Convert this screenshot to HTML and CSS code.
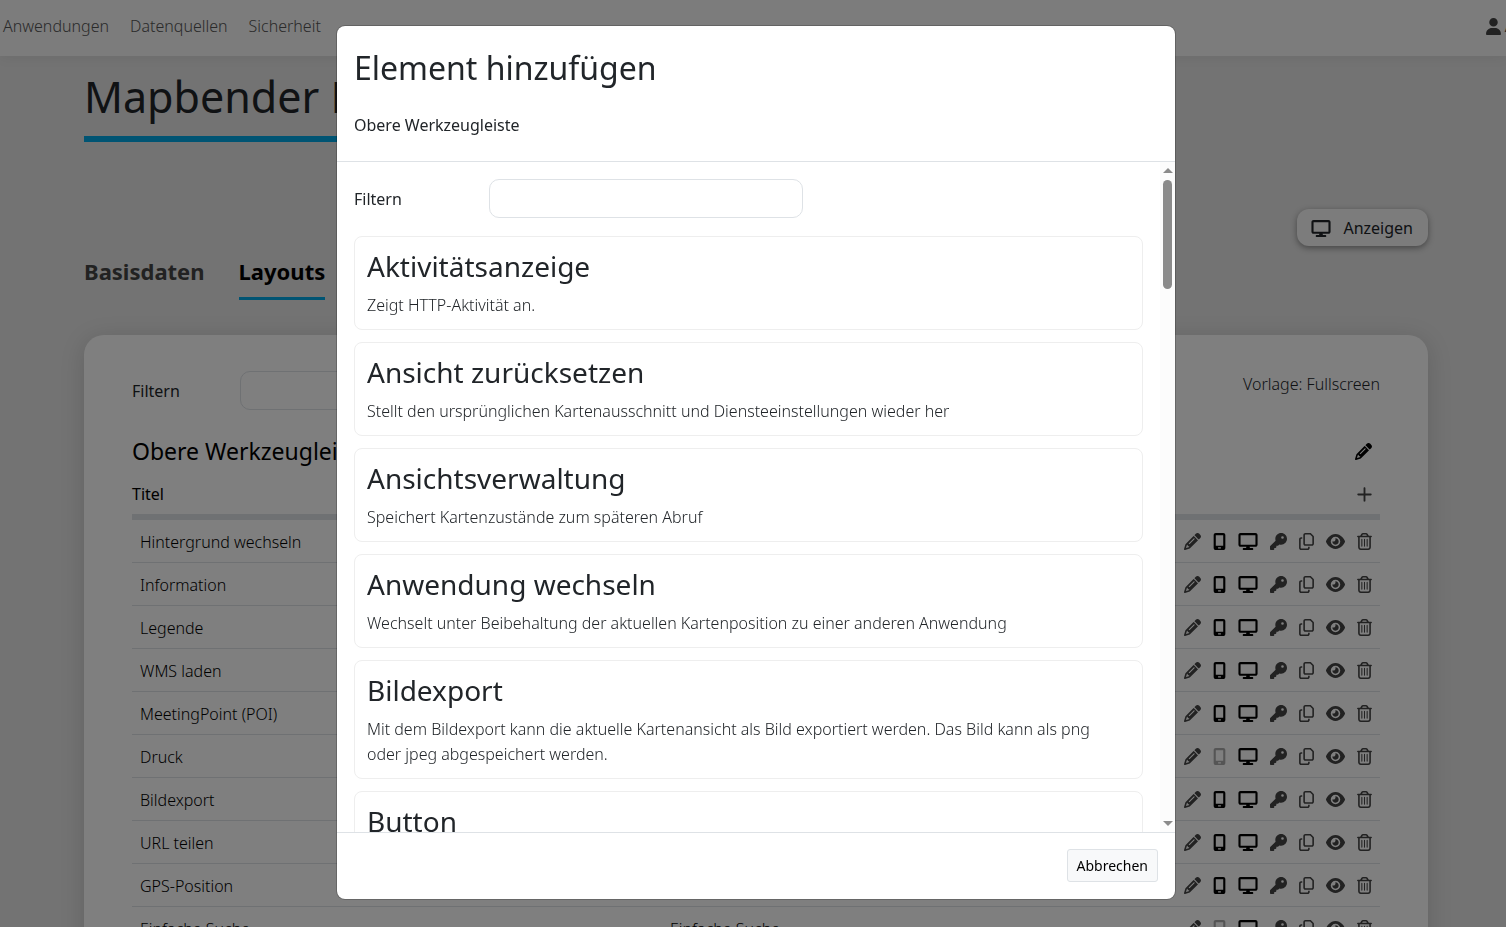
FILE: index.html
```html
<!DOCTYPE html>
<html lang="de">
<head>
<meta charset="UTF-8">
<meta name="viewport" content="width=device-width, initial-scale=1.0">
<title>Mapbender</title>
<link rel="stylesheet" href="styles.css">
</head>
<body>
<svg class="sprite" aria-hidden="true">
  <symbol id="icon-pencil" viewBox="0 0 512 512"><path d="M410.3 231l11.3-11.3-33.9-33.9-62.1-62.1L291.7 89.8l-11.3 11.3-22.6 22.6L58.6 322.9c-10.4 10.4-18 23.3-22.2 37.4L1 480.7c-2.5 8.4-.2 17.5 6.1 23.7s15.3 8.5 23.7 6.1l120.3-35.4c14.1-4.2 27-11.8 37.4-22.2L387.7 253.7 410.3 231zM160 399.4l-9.1 22.7c-4 3.1-8.5 5.4-13.3 6.9L59.4 452l23-78.1c1.4-4.9 3.8-9.4 6.9-13.3l22.7-9.1v32c0 8.8 7.2 16 16 16h32zM362.7 18.7L348.3 33.2 325.7 55.8 314.3 67.1l33.9 33.9 62.1 62.1 33.9 33.9 11.3-11.3 22.6-22.6 14.5-14.5c25-25 25-65.5 0-90.5L453.3 18.7c-25-25-65.5-25-90.5 0zm-47.4 168l-144 144c-6.2 6.2-16.4 6.2-22.6 0s-6.2-16.4 0-22.6l144-144c6.2-6.2 16.4-6.2 22.6 0s6.2 16.4 0 22.6z"/></symbol>
  <symbol id="icon-mobile" viewBox="0 0 384 512"><path d="M16 64C16 28.7 44.7 0 80 0H304c35.3 0 64 28.7 64 64V448c0 35.3-28.7 64-64 64H80c-35.3 0-64-28.7-64-64V64zM144 448c0 8.8 7.2 16 16 16h64c8.8 0 16-7.2 16-16s-7.2-16-16-16H160c-8.8 0-16 7.2-16 16zM304 64H80V384H304V64z"/></symbol>
  <symbol id="icon-desktop" viewBox="0 0 576 512"><path d="M64 0C28.7 0 0 28.7 0 64V352c0 35.3 28.7 64 64 64H240l-10.7 32H160c-17.7 0-32 14.3-32 32s14.3 32 32 32H416c17.7 0 32-14.3 32-32s-14.3-32-32-32H346.7L336 416H512c35.3 0 64-28.7 64-64V64c0-35.3-28.7-64-64-64H64zM512 64V352H64V64H512z"/></symbol>
  <symbol id="icon-key" viewBox="0 0 512 512"><path d="M336 352c97.2 0 176-78.8 176-176S433.2 0 336 0S160 78.8 160 176c0 18.7 2.9 36.8 8.3 53.7L7 391c-4.5 4.5-7 10.6-7 17v80c0 13.3 10.7 24 24 24h80c13.3 0 24-10.7 24-24V448h40c13.3 0 24-10.7 24-24V384h40c6.4 0 12.5-2.5 17-7l33.3-33.3c16.9 5.4 35 8.3 53.7 8.3zM376 96a40 40 0 1 1 0 80 40 40 0 1 1 0-80z"/></symbol>
  <symbol id="icon-copy" viewBox="0 0 448 512"><path d="M384 336H192c-8.8 0-16-7.2-16-16V64c0-8.8 7.2-16 16-16l140.1 0L400 115.9V320c0 8.8-7.2 16-16 16zM192 384H384c35.3 0 64-28.7 64-64V115.9c0-12.7-5.1-24.9-14.1-33.9L366.1 14.1c-9-9-21.2-14.1-33.9-14.1H192c-35.3 0-64 28.7-64 64V320c0 35.3 28.7 64 64 64zM64 128c-35.3 0-64 28.7-64 64V448c0 35.3 28.7 64 64 64H256c35.3 0 64-28.7 64-64V416H272v32c0 8.8-7.2 16-16 16H64c-8.8 0-16-7.2-16-16V192c0-8.8 7.2-16 16-16H96V128H64z"/></symbol>
  <symbol id="icon-eye" viewBox="0 0 576 512"><path d="M288 32c-80.8 0-145.5 36.8-192.6 80.6C48.6 156 17.3 208 2.5 243.7c-3.3 7.9-3.3 16.7 0 24.6C17.3 304 48.6 356 95.4 399.4C142.5 443.2 207.2 480 288 480s145.5-36.8 192.6-80.6c46.8-43.5 78.1-95.4 93-131.1c3.3-7.9 3.3-16.7 0-24.6c-14.9-35.7-46.2-87.7-93-131.1C433.5 68.8 368.8 32 288 32zM144 256a144 144 0 1 1 288 0 144 144 0 1 1 -288 0zm144-64c0 35.3-28.7 64-64 64c-7.1 0-13.9-1.2-20.3-3.3c-5.5-1.8-11.9 1.6-11.7 7.4c.3 6.9 1.3 13.8 3.2 20.7c13.7 51.2 66.4 81.6 117.6 67.9s81.6-66.4 67.9-117.6c-11.1-41.5-47.8-69.4-88.6-71.1c-5.8-.2-9.2 6.1-7.4 11.7c2.1 6.4 3.3 13.2 3.3 20.3z"/></symbol>
  <symbol id="icon-trash" viewBox="0 0 448 512"><path d="M170.5 51.6L151.5 80h145l-19-28.4c-1.5-2.2-4-3.6-6.7-3.6H177.1c-2.7 0-5.2 1.3-6.7 3.6zm147-26.6L354.2 80H368h48 8c13.3 0 24 10.7 24 24s-10.7 24-24 24h-8V432c0 44.2-35.8 80-80 80H112c-44.2 0-80-35.8-80-80V128H24c-13.3 0-24-10.7-24-24S10.7 80 24 80h8H80 93.8l36.7-55.1C140.9 9.4 158.4 0 177.1 0h93.7c18.7 0 36.2 9.4 46.6 24.9zM80 128V432c0 17.7 14.3 32 32 32H336c17.7 0 32-14.3 32-32V128H80zm80 64V400c0 8.8-7.2 16-16 16s-16-7.2-16-16V192c0-8.8 7.2-16 16-16s16 7.2 16 16zm80 0V400c0 8.8-7.2 16-16 16s-16-7.2-16-16V192c0-8.8 7.2-16 16-16s16 7.2 16 16zm80 0V400c0 8.8-7.2 16-16 16s-16-7.2-16-16V192c0-8.8 7.2-16 16-16s16 7.2 16 16z"/></symbol>
  <symbol id="icon-user" viewBox="0 0 448 512"><path d="M224 256A128 128 0 1 0 224 0a128 128 0 1 0 0 256zm-45.7 48C79.8 304 0 383.8 0 482.3C0 498.7 13.3 512 29.7 512H418.3c16.4 0 29.7-13.3 29.7-29.7C448 383.8 368.2 304 269.7 304H178.3z"/></symbol>
  <symbol id="icon-plus" viewBox="0 0 448 512"><path d="M252 68c0-15-12-28-28-28s-28 13-28 28V228H36c-15 0-28 12-28 28s13 28 28 28H196V444c0 15 12 28 28 28s28-13 28-28V284H412c15 0 28-12 28-28s-13-28-28-28H252V68z"/></symbol>
</svg>

<header class="navbar">
  <nav class="nav-links">
    <a href="#">Anwendungen</a>
    <a href="#">Datenquellen</a>
    <a href="#">Sicherheit</a>
  </nav>
  <a href="#" class="account"><svg class="icon w15"><use href="#icon-user"/></svg>A</a>
</header>

<main class="content">
  <h1 class="page-title">Mapbender Demo</h1>
  <div class="actions">
    <button type="button" class="show-button"><svg class="icon w20"><use href="#icon-desktop"/></svg>Anzeigen</button>
  </div>
  <nav class="tabs">
    <a href="#">Basisdaten</a>
    <a href="#" class="active">Layouts</a>
  </nav>
  <section class="panel">
    <div class="panel-top">
      <label for="tableFilter">Filtern</label>
      <input type="text" id="tableFilter" class="input">
      <span class="template">Vorlage: Fullscreen</span>
    </div>
    <div class="region-head">
      <h2>Obere Werkzeugleiste</h2>
      <button type="button" class="icon-button" aria-label="Bearbeiten"><svg class="icon w17"><use href="#icon-pencil"/></svg></button>
    </div>
    <table class="elements">
      <thead>
        <tr>
          <th class="title">Titel</th>
          <th></th>
          <th class="tools"><button type="button" class="icon-button" aria-label="Hinzufügen"><svg class="icon w15"><use href="#icon-plus"/></svg></button></th>
        </tr>
      </thead>
      <tbody id="elementRows"></tbody>
    </table>
  </section>
</main>

<div class="backdrop">
  <div class="modal" role="dialog" aria-modal="true" aria-labelledby="modalTitle">
    <div class="modal-header">
      <h2 id="modalTitle">Element hinzufügen</h2>
      <p>Obere Werkzeugleiste</p>
    </div>
    <div class="modal-main">
      <div class="modal-body">
        <div class="filter">
          <label for="elementFilter">Filtern</label>
          <input type="text" id="elementFilter" class="input">
        </div>
        <a href="#" class="card">
          <h3>Aktivitätsanzeige</h3>
          <p>Zeigt HTTP-Aktivität an.</p>
        </a>
        <a href="#" class="card">
          <h3>Ansicht zurücksetzen</h3>
          <p>Stellt den ursprünglichen Kartenausschnitt und Diensteeinstellungen wieder her</p>
        </a>
        <a href="#" class="card">
          <h3>Ansichtsverwaltung</h3>
          <p>Speichert Kartenzustände zum späteren Abruf</p>
        </a>
        <a href="#" class="card">
          <h3>Anwendung wechseln</h3>
          <p>Wechselt unter Beibehaltung der aktuellen Kartenposition zu einer anderen Anwendung</p>
        </a>
        <a href="#" class="card">
          <h3>Bildexport</h3>
          <p>Mit dem Bildexport kann die aktuelle Kartenansicht als Bild exportiert werden. Das Bild kann als png oder jpeg abgespeichert werden.</p>
        </a>
        <a href="#" class="card">
          <h3>Button</h3>
        </a>
      </div>
      <div class="scrollbar" aria-hidden="true">
        <span class="arrow-up"></span>
        <span class="thumb"></span>
        <span class="arrow-down"></span>
      </div>
    </div>
    <div class="modal-footer">
      <button type="button" class="cancel">Abbrechen</button>
    </div>
  </div>
</div>

<script>
var elements = [
  { title: 'Hintergrund wechseln', mobile: true },
  { title: 'Information', mobile: true },
  { title: 'Legende', mobile: true },
  { title: 'WMS laden', mobile: true },
  { title: 'MeetingPoint (POI)', mobile: true },
  { title: 'Druck', mobile: false },
  { title: 'Bildexport', mobile: true },
  { title: 'URL teilen', mobile: true },
  { title: 'GPS-Position', mobile: true },
  { title: 'Einfache Suche', type: 'Einfache Suche', mobile: false }
];

function iconButton(name, size, label, state) {
  return `<button type="button" class="icon-button ${state || ''}" aria-label="${label}"><svg class="icon ${size}"><use href="#icon-${name}"/></svg></button>`;
}

var tbody = document.getElementById('elementRows');

elements.forEach(function(element) {
  var row = document.createElement('tr');
  row.innerHTML = `<td>${element.title}</td>
                   <td>${element.type || ''}</td>
                   <td class="tools"><div class="tool-list">
                     ${iconButton('pencil', 'w17', 'Bearbeiten', 'muted')}
                     ${iconButton('mobile', 'w13', 'Mobil', element.mobile ? '' : 'off')}
                     ${iconButton('desktop', 'w20', 'Desktop')}
                     ${iconButton('key', 'w17', 'Rechte', 'muted')}
                     ${iconButton('copy', 'w15', 'Duplizieren', 'muted')}
                     ${iconButton('eye', 'w19', 'Sichtbar', 'muted')}
                     ${iconButton('trash', 'w15', 'Löschen', 'muted')}
                   </div></td>`;
  tbody.appendChild(row);
});
</script>
</body>
</html>
```
FILE: styles.css
```css
* {
  box-sizing: border-box;
}

html, body {
  height: 100%;
}

body {
  margin: 0;
  overflow: hidden;
  background-color: #e6e6e6;
  color: #212529;
  font-family: "Noto Sans", "Open Sans", sans-serif;
  font-size: 16px;
  font-weight: 300;
  line-height: 25px;
}

h1, h2, h3, p {
  margin: 0;
}

h1, h2, h3 {
  font-weight: 400;
}

a {
  color: inherit;
  text-decoration: none;
}

button, input {
  font: inherit;
  color: inherit;
}

label {
  padding-top: 2px;
  font-weight: 400;
}

.sprite {
  display: none;
}

.icon {
  display: block;
  flex: none;
  height: 17px;
  fill: currentColor;
}

.w13 { width: 13px; }
.w15 { width: 15px; }
.w17 { width: 17px; }
.w19 { width: 19px; }
.w20 { width: 20px; }

/* Navigation */
.navbar {
  position: relative;
  display: flex;
  justify-content: space-between;
  align-items: center;
  height: 56px;
  padding: 0 0 4px 3px;
  background-color: #f8f8f8;
  box-shadow: 0 2px 12px rgba(0, 0, 0, 0.06);
}

.nav-links {
  display: flex;
  gap: 21px;
  color: #555;
}

.account {
  display: flex;
  align-items: center;
  gap: 4px;
  margin-right: -9px;
  color: #444;
  font-weight: 400;
}

/* Page */
.content {
  padding: 10px 78px 0 84px;
}

.page-title {
  width: fit-content;
  padding-bottom: 8px;
  border-bottom: 6px solid #00a8e6;
  font-size: 43px;
  line-height: 62px;
}

.actions {
  display: flex;
  justify-content: flex-end;
  margin-top: 67px;
}

.show-button {
  display: flex;
  align-items: center;
  gap: 12px;
  height: 37px;
  padding: 1px 15px 0 14px;
  border: 0;
  border-radius: 12px;
  background-color: #f8f8f8;
  box-shadow: 0 2px 6px rgba(0, 0, 0, 0.4);
  font-weight: 400;
}

.tabs {
  display: flex;
  gap: 34px;
  margin-top: 12px;
  color: #444;
  font-size: 22px;
  font-weight: 700;
  line-height: 26px;
}

.tabs a {
  padding-bottom: 13px;
  border-bottom: 3px solid transparent;
}

.tabs .active {
  border-color: #00a8e6;
  color: #000;
}

.panel {
  margin-top: 35px;
  padding: 36px 48px;
  border-radius: 20px;
  background-color: #fff;
  box-shadow: 0 4px 24px rgba(0, 0, 0, 0.15);
}

.input {
  width: 314px;
  height: 39px;
  padding: 0 12px;
  border: 1px solid #dee2e6;
  border-radius: 10px;
  background-color: #fff;
}

.panel-top {
  display: flex;
  align-items: center;
}

.panel-top label {
  width: 108px;
}

.template {
  margin-left: auto;
  padding-bottom: 12px;
}

.region-head {
  display: flex;
  justify-content: space-between;
  align-items: center;
  margin-top: 24px;
  padding-right: 8px;
  color: #000;
}

.region-head h2 {
  font-size: 23px;
  line-height: 34px;
}

.icon-button {
  display: block;
  padding: 0;
  border: 0;
  background: none;
  color: #000;
}

.icon-button.muted {
  color: #444;
}

.icon-button.off {
  color: #aaa;
}

.elements {
  width: 100%;
  margin-top: 6px;
  border-collapse: separate;
  border-spacing: 0;
  table-layout: fixed;
  color: #000;
}

.elements th {
  height: 46px;
  padding: 0;
  border-bottom: 6px solid #dee2e6;
  font-weight: 400;
  text-align: left;
}

.elements .title {
  width: 530px;
}

.elements td {
  height: 43px;
  padding: 2px 8px 0;
  border-bottom: 1px solid #dee2e6;
}

.elements .tools {
  width: 204px;
  padding: 0 8px 0 0;
}

.elements th.tools .icon-button {
  margin-left: auto;
  color: #444;
}

.tool-list {
  display: flex;
  justify-content: flex-end;
  gap: 12px;
}

/* Modal */
.backdrop {
  position: fixed;
  inset: 0;
  display: flex;
  justify-content: center;
  padding: 25px 0 27px 6px;
  background-color: rgba(0, 0, 0, 0.5);
}

.modal {
  display: flex;
  flex-direction: column;
  width: 100%;
  max-width: 840px;
  border: 1px solid rgba(0, 0, 0, 0.2);
  border-radius: 9px;
  background-color: #fff;
  background-clip: padding-box;
}

.modal-header {
  padding: 17px 17px 23px;
  border-bottom: 1px solid #dee2e6;
}

.modal-header h2 {
  font-size: 32px;
  line-height: 50px;
}

.modal-header p {
  margin-top: 20px;
  font-weight: 400;
}

.modal-main {
  display: flex;
  flex: 1;
  min-height: 0;
}

.modal-body {
  flex: 1;
  padding: 17px;
  overflow: hidden;
}

.filter {
  display: flex;
  align-items: center;
  margin-bottom: 18px;
}

.filter label {
  width: 135px;
}

.card {
  display: block;
  margin-bottom: 12px;
  padding: 12px 16px 11px 12px;
  border: 1px solid #eee;
  border-radius: 8px;
}

.card h3 {
  margin-bottom: 10px;
  font-size: 28px;
  line-height: 34px;
}

.scrollbar {
  display: flex;
  flex-direction: column;
  align-items: center;
  width: 15px;
  padding: 6px 0;
  background-color: #fcfcfc;
}

.arrow-up, .arrow-down {
  border: 5px solid transparent;
  border-top-width: 0;
  border-bottom-color: #8b8b8b;
}

.arrow-down {
  margin-top: auto;
  border-top: 5px solid #8b8b8b;
  border-bottom-width: 0;
}

.thumb {
  width: 9px;
  height: 109px;
  margin-top: 7px;
  border-radius: 5px;
  background-color: #8b8b8b;
}

.modal-footer {
  display: flex;
  justify-content: flex-end;
  padding: 16px 17px 17px;
  border-top: 1px solid #dee2e6;
}

.cancel {
  height: 33px;
  padding: 0 9px;
  border: 1px solid #dee2e6;
  border-radius: 3px;
  background-color: #f8f9fa;
  color: #000;
  font-size: 14px;
  font-weight: 400;
}
```
